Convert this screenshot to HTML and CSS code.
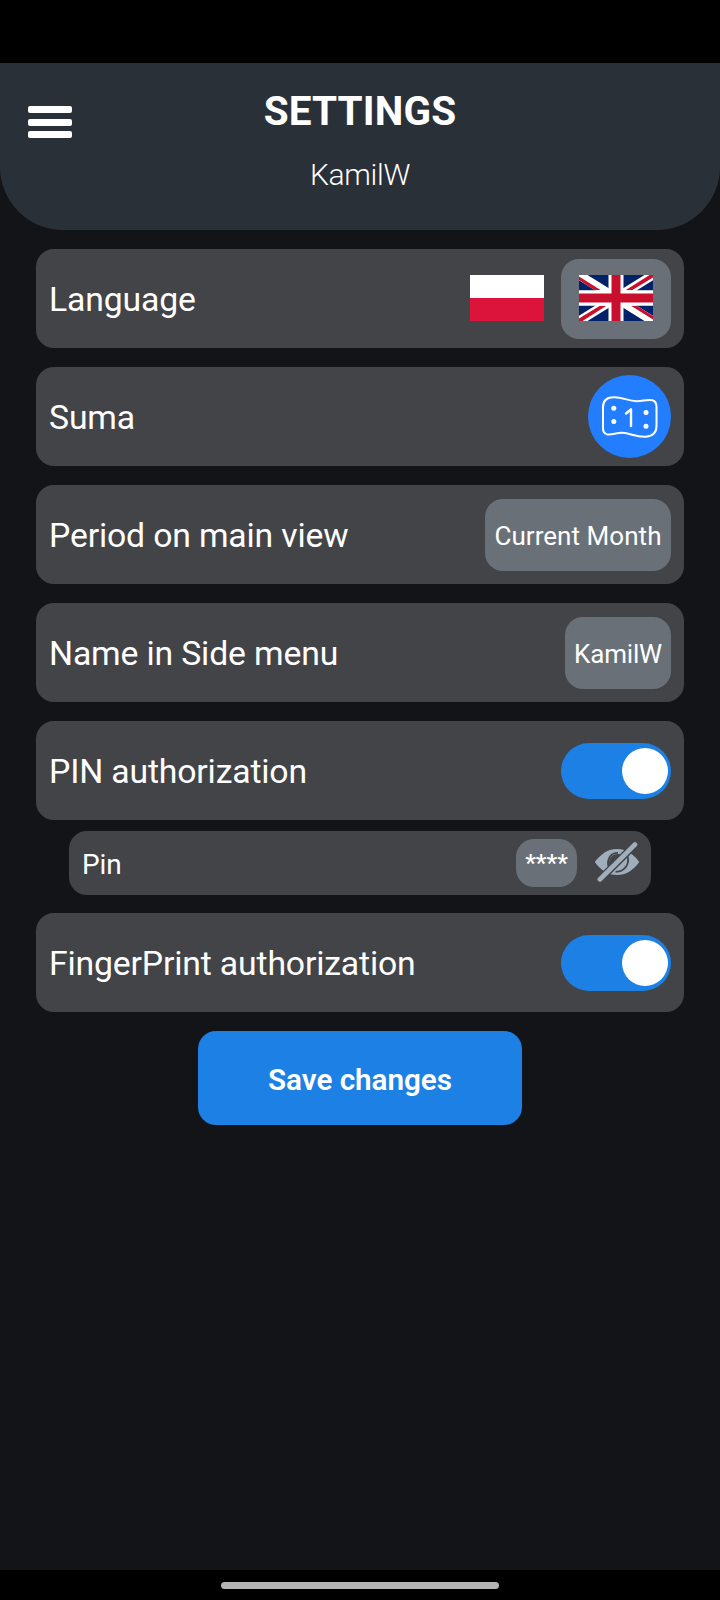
FILE: index.html
```html
<!DOCTYPE html>
<html lang="en">
<head>
<meta charset="utf-8">
<title>Settings</title>
<link rel="stylesheet" href="styles.css">
</head>
<body>
<div class="screen">
  <header class="header">
    <button class="menu" aria-label="Menu"><span></span><span></span><span></span></button>
    <div class="heading">
      <h1 class="title">SETTINGS</h1>
      <p class="user">KamilW</p>
    </div>
  </header>
  <main class="settings">
    <section class="row">
      <span class="label">Language</span>
      <div class="flags">
        <svg class="flag" viewBox="0 0 74 46" preserveAspectRatio="none"><path fill="#fff" d="M0 0h74v23H0z"/><path fill="#dc143c" d="M0 23h74v23H0z"/></svg>
        <div class="selected">
          <svg class="flag" viewBox="0 0 74 46" preserveAspectRatio="none">
            <path fill="#012169" d="M0 0h74v46H0z"/>
            <path stroke="#fff" stroke-width="9" d="M0 0l74 46M74 0L0 46"/>
            <path fill="#c8102e" d="M0 1.500L22 15.300H16L0 5zM74 44.500L52 30.700h6L74 41zM74 0h-3.500L46.500 15.300h6.500L74 2.500zM0 46h3.500L27.500 30.700H21L0 43.500z"/>
            <path fill="#fff" d="M29.500 0h15v15.300H74v15.400H44.500V46h-15V30.700H0V15.300h29.500z"/>
            <path fill="#c8102e" d="M32.500 0h9v18.500H74v9H41.500V46h-9V27.500H0v-9h32.500z"/>
          </svg>
        </div>
      </div>
    </section>
    <section class="row">
      <span class="label">Suma</span>
      <svg class="money" viewBox="0 0 83 83">
        <circle cx="41.500" cy="41.500" r="41.500" fill="#227eff"/>
        <g fill="none" stroke="#fff" stroke-width="2" stroke-linecap="round" stroke-linejoin="round">
          <path d="M15 32C15 25.500 18.500 22.500 25 22.200C34 21.500 40 26.400 49 26.200C55 26 60 24 64.500 25.200C67.500 26 68.500 28.500 68.500 32V51C68.500 58 64.500 61 58 61.700C48 62.500 42 57.700 34 57.800C28 57.900 23 60.500 19 59.400C16 58.500 15 56 15 53Z"/>
          <path stroke-width="2.400" d="M38 38.500L43 34.300V51"/>
        </g>
        <g fill="#fff"><circle cx="25.800" cy="33.200" r="2.500"/><circle cx="25.800" cy="46.500" r="2.500"/><circle cx="58" cy="37.500" r="2.500"/><circle cx="58" cy="51.300" r="2.500"/></g>
      </svg>
    </section>
    <section class="row">
      <span class="label">Period on main view</span>
      <span class="value period">Current Month</span>
    </section>
    <section class="row">
      <span class="label">Name in Side menu</span>
      <span class="value name">KamilW</span>
    </section>
    <section class="row">
      <span class="label">PIN authorization</span>
      <span class="toggle"><span class="knob"></span></span>
    </section>
    <section class="row pin-row">
      <span class="label">Pin</span>
      <div class="pin-controls">
        <span class="pin">****</span>
        <svg class="eye" viewBox="0 0 46 42">
          <path fill="#a0aebb" d="M0.800 20C7 11.500 14.500 7 23 7S39.500 11.500 45.200 20C39.500 28.500 31.500 33 23 33S6.500 28.500 0.800 20Z"/>
          <path fill="none" stroke="#424448" stroke-width="1.800" d="M17 28.500C11 22 14.500 10.500 24 10.800M33 13.500C36.500 21 31 30 21.500 29.800"/>
          <path fill="#424448" d="M15.500 24C13.800 18 17 12 24 12L28 12.500L16 26Z"/>
          <path stroke="#424448" stroke-width="7.500" d="M4 39.500L42.500 1"/>
          <path stroke="#a0aebb" stroke-width="4.600" stroke-linecap="round" d="M5.800 37.500L41 2.500"/>
        </svg>
      </div>
    </section>
    <section class="row">
      <span class="label">FingerPrint authorization</span>
      <span class="toggle"><span class="knob"></span></span>
    </section>
    <button class="save">Save changes</button>
  </main>
  <footer class="navbar"><span class="handle"></span></footer>
</div>
</body>
</html>
```
FILE: styles.css
```css
* { box-sizing: border-box; }
body { margin: 0; background: #000; color: #fff; font-family: Roboto, "Liberation Sans", sans-serif; }
button { border: 0; padding: 0; color: inherit; font-family: inherit; }
.screen { width: 720px; height: 1600px; padding-top: 63px; display: flex; flex-direction: column; background: linear-gradient(#000 63px, #131418 63px); }
.header { height: 167px; display: grid; grid-template-columns: 100px 1fr 100px; background: #2a3038; border-radius: 0 0 63px 63px; }
.menu { background: none; margin: 43px 0 0 28px; width: 44px; height: 32px; display: flex; flex-direction: column; justify-content: space-between; }
.menu span { width: 44px; height: 7px; border-radius: 2px; background: #fff; }
.heading { display: flex; flex-direction: column; align-items: center; padding-top: 25px; }
.title { margin: 0; font-size: 40.5px; line-height: 47px; font-weight: 700; letter-spacing: 0.1px; }
.user { margin: 22px 0 0; font-size: 30px; line-height: 36px; font-weight: 300; letter-spacing: -0.3px; }
.settings { flex: 1; padding: 19px 36px 0; display: flex; flex-direction: column; }
.row { height: 99px; margin-bottom: 19px; padding: 0 13px; flex: none; display: flex; align-items: center; justify-content: space-between; background: #424448; border-radius: 18px; }
.label { font-size: 33.75px; line-height: 40px; padding-top: 3px; white-space: nowrap; letter-spacing: -0.16px; }
.flags { display: flex; align-items: center; gap: 17px; }
.flag { display: block; width: 74px; height: 46px; margin-bottom: 2px; }
.selected { width: 110px; height: 80px; display: flex; align-items: center; justify-content: center; border-radius: 18px; background: #6a7078; }
.money { width: 83px; height: 83px; }
.value { height: 72px; display: flex; align-items: center; justify-content: center; border-radius: 18px; background: #6a7078; font-size: 26px; padding-top: 2px; white-space: nowrap; }
.period { width: 186px; letter-spacing: 0.05px; }
.name { width: 106px; letter-spacing: -0.2px; }
.toggle { width: 110px; height: 56px; padding-right: 3px; display: flex; align-items: center; justify-content: flex-end; border-radius: 28px; background: #1d80e5; }
.knob { width: 46px; height: 46px; border-radius: 50%; background: #fff; }
.pin-row { height: 63.5px; margin: -8px 33px 18.5px; }
.pin-row .label { font-size: 28px; padding-top: 4px; }
.pin-controls { display: flex; align-items: center; gap: 17px; margin-right: -2px; }
.pin { width: 61px; height: 48px; display: flex; align-items: center; justify-content: center; border-radius: 18px; background: #6a7078; font-size: 24px; font-weight: 500; }
.eye { width: 46px; height: 42px; }
.save { width: 324px; height: 94px; align-self: center; padding-top: 3px; border-radius: 18px; background: #1d80e5; font-size: 29.7px; font-weight: 600; letter-spacing: -0.05px; }
.navbar { height: 30px; padding-top: 12px; display: flex; justify-content: center; background: #000; }
.handle { width: 278px; height: 7px; border-radius: 4px; background: #b4b4b4; }
```
